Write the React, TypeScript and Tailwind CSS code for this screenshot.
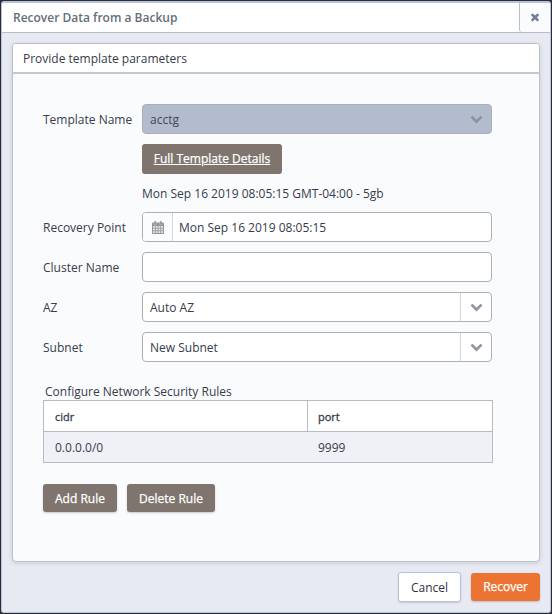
import type { ReactNode } from "react";

function Chevron({ className }: { className: string }) {
  return (
    <svg viewBox="0 0 1792 1792" className={`size-[13px] ${className}`} fill="currentColor" aria-hidden="true">
      <path d="M1683 808l-742 741q-19 19-45 19t-45-19l-742-741q-19-19-19-45.5t19-45.5l166-165q19-19 45-19t45 19l531 531 531-531q19-19 45-19t45 19l166 165q19 19 19 45.5t-19 45.5z" />
    </svg>
  );
}

function CloseIcon() {
  return (
    <svg viewBox="0 0 1792 1792" className="size-3" fill="currentColor" aria-hidden="true">
      <path d="M1490 1322q0 40-28 68l-136 136q-28 28-68 28t-68-28l-294-294-294 294q-28 28-68 28t-68-28l-136-136q-28-28-28-68t28-68l294-294-294-294q-28-28-28-68t28-68l136-136q28-28 68-28t68 28l294 294 294-294q28-28 68-28t68 28l136 136q28 28 28 68t-28 68l-294 294 294 294q28 28 28 68z" />
    </svg>
  );
}

function CalendarIcon() {
  return (
    <svg viewBox="0 0 12 13" className="h-[13px] w-3 text-[#8f959b]" aria-hidden="true">
      <rect x="0" y="1.6" width="12" height="11.4" rx="0.9" fill="currentColor" />
      <g fill="currentColor" stroke="#fbfcfe" strokeWidth="0.3">
        <rect x="2" y="0" width="2.4" height="3.8" rx="0.9" />
        <rect x="7.6" y="0" width="2.4" height="3.8" rx="0.9" />
      </g>
      <g fill="#e4e7ea">
        {[5, 7.6, 10.2].map((y) =>
          [1, 3.7, 6.4, 9.1].map((x) => (
            <rect key={`${x}-${y}`} x={x} y={y} width="1.9" height="1.8" />
          )),
        )}
      </g>
    </svg>
  );
}

function Field({ label, children }: { label: string; children: ReactNode }) {
  return (
    <div className="flex h-[30px] items-center">
      <label className="w-[99px] shrink-0 pt-[2px]">{label}</label>
      {children}
    </div>
  );
}

const box = "flex h-[30px] w-[350px] items-stretch overflow-hidden rounded-[4px] border border-[#abafb6]";

function Select({ value, disabled = false }: { value: string; disabled?: boolean }) {
  return (
    <div className={`${box} ${disabled ? "bg-[#b3bbcf] text-[#414756]" : "bg-white"}`}>
      <span className="flex flex-1 items-center pl-[7px] pt-[2px]">{value}</span>
      <span
        className={`flex w-[31px] items-center justify-center border-l pb-px ${disabled ? "border-transparent" : "border-[#d5d8dc]"}`}
      >
        <Chevron className={disabled ? "text-[#8c939d]" : "text-[#8f959e]"} />
      </span>
    </div>
  );
}

const brown =
  "flex shrink-0 items-center justify-center rounded-[3px] bg-[#7f756e] font-medium text-white [-webkit-text-stroke:0.25px_white]";

const headCell = "flex items-center border-b border-[#b9bbc3] bg-white pt-[2px] text-[11px] font-medium [-webkit-text-stroke:0.3px]";

export default function App() {
  return (
    <div className="h-[614px] w-[552px] bg-[#2d2d33] p-px font-['Open_Sans',sans-serif] text-[12px] leading-[18px] text-[#363c4b]">
      <div className="flex h-full flex-col overflow-hidden rounded-[3px] border border-t-2 border-[#b9c2dc] bg-[#e7eaf3]">
        <header className="flex h-[30px] shrink-0 border-b border-[#b7bcca] bg-white">
          <h1 className="flex-1 pl-[11px] pt-[6px] font-semibold text-[#666d79]">
            Recover Data from a Backup
          </h1>
          <button className="flex w-[31px] items-center justify-center rounded-bl-[3px] border-l border-[#b9bfcc] bg-[#fafbfd] pb-[2px] text-[#727e9b]">
            <CloseIcon />
          </button>
        </header>
        <main className="mx-[10px] mt-[10px] flex h-[519px] shrink-0 flex-col overflow-hidden rounded-[4px] border border-[#bfc1c8] bg-[#fafbfd] shadow-[0_1px_4px_rgba(60,65,80,0.18)]">
          <h2 className="h-[30px] shrink-0 border-b-2 border-[#c5c9d0] bg-white pl-[10px] pt-[6px]">
            Provide template parameters
          </h2>
          <div className="flex flex-col px-[30px] pt-[30px]">
            <div className="flex flex-col gap-[10px]">
              <Field label="Template Name">
                <Select value="acctg" disabled />
              </Field>
              <div className="flex h-[58px] flex-col items-start pl-[99px]">
                <button className={`${brown} h-[30px] w-[140px] underline underline-offset-1`}>
                  Full Template Details
                </button>
                <p className="mt-[11px] whitespace-nowrap">Mon Sep 16 2019 08:05:15 GMT-04:00 - 5gb</p>
              </div>
              <Field label="Recovery Point">
                <div className={`${box} bg-white`}>
                  <span className="flex w-[30px] items-center justify-center border-r border-[#d5d8dc] bg-[#fbfcfe]">
                    <CalendarIcon />
                  </span>
                  <span className="flex items-center pl-[6px] pt-[2px]">Mon Sep 16 2019 08:05:15</span>
                </div>
              </Field>
              <Field label="Cluster Name">
                <div className={`${box} bg-white`} />
              </Field>
              <Field label="AZ">
                <Select value="Auto AZ" />
              </Field>
              <Field label="Subnet">
                <Select value="New Subnet" />
              </Field>
            </div>
            <p className="mt-[21px] h-[17px] pl-[2px]">Configure Network Security Rules</p>
            <div className="grid h-[63px] w-[450px] grid-cols-[264px_1fr] grid-rows-[31px_1fr] border border-[#b9bbc3]">
              <div className={`${headCell} border-r pl-[11px]`}>cidr</div>
              <div className={`${headCell} pl-[10px]`}>port</div>
              <div className="flex items-center bg-[#f0f1f7] pl-[11px] pt-[2px]">0.0.0.0/0</div>
              <div className="flex items-center bg-[#f0f1f7] pl-[10px] pt-[2px]">9999</div>
            </div>
            <div className="mt-[21px] flex gap-[10px]">
              <button className={`${brown} h-7 w-[74px] pt-[2px] shadow-[0_1px_2px_rgba(60,60,70,0.25)]`}>Add Rule</button>
              <button className={`${brown} h-7 w-[88px] pt-[2px] shadow-[0_1px_2px_rgba(60,60,70,0.25)]`}>Delete Rule</button>
            </div>
          </div>
        </main>
        <footer className="mx-[10px] mt-[10px] flex items-center justify-end gap-[10px]">
          <button className="h-[30px] w-[63px] rounded-[3px] border border-[#b9c2dc] bg-white pt-[2px] text-[#2f333b] shadow-[0_1px_2px_rgba(60,60,70,0.2)]">
            Cancel
          </button>
          <button className="h-7 w-[69px] rounded-[3px] bg-[#ec7432] font-medium text-white shadow-[0_1px_2px_rgba(60,60,70,0.25)] [-webkit-text-stroke:0.25px_white]">
            Recover
          </button>
        </footer>
      </div>
    </div>
  );
}
